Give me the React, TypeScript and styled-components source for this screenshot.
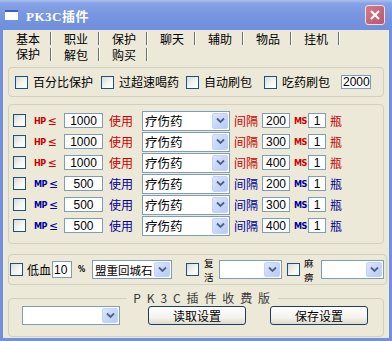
import styled, { createGlobalStyle } from "styled-components";

const GlobalStyle = createGlobalStyle`
  html, body { margin: 0; padding: 0; background: #ffffff; }
  body {
    font-family: "Noto Sans CJK SC", "DejaVu Sans", sans-serif;
    font-size: 12px;
    color: #000;
  }
  * { box-sizing: border-box; }
`;

const RED = "#cc0000";
const BLUE = "#000099";

const Window = styled.div`
  width: 392px;
  height: 341px;
  display: flex;
  flex-direction: column;
  background: #7390dc;
`;

const TitleBar = styled.div`
  height: 30px;
  display: flex;
  align-items: center;
  padding: 0 7px 0 5px;
  background: linear-gradient(#a9bff0 0%, #86a2e6 12%, #7896e0 50%, #6f8edc 100%);
`;

const TitleIcon = styled.div`
  width: 13px;
  height: 10px;
  background: #fff;
  border-top: 2px solid #3a5fc0;
  margin-right: 8px;
`;

const TitleText = styled.span`
  flex: 1;
  color: #fff;
  font-weight: bold;
  font-size: 13px;
  font-family: "Liberation Serif", "Noto Sans CJK SC", serif;
  letter-spacing: 0.5px;
`;

const CloseButton = styled.div`
  width: 20px;
  height: 20px;
  border: 1px solid #f2dde2;
  border-radius: 3px;
  background: linear-gradient(135deg, #d47c88, #b9566a);
  display: flex;
  align-items: center;
  justify-content: center;
`;

const Frame = styled.div`
  flex: 1;
  padding: 0 3px 3px 3px;
  display: flex;
`;

const Body = styled.div`
  flex: 1;
  background: #ece9d8;
  display: flex;
  flex-direction: column;
`;

const TabRow = styled.div`
  display: flex;
  height: 16px;
`;

const Tab = styled.div<{ $active?: boolean }>`
  width: 48px;
  height: 16px;
  position: relative;
  display: flex;
  align-items: center;
  justify-content: center;
  font-size: 12px;
  line-height: 12px;
  padding-top: ${(p) => (p.$active ? "0" : "1px")};
  padding-left: 2px;

  &::after {
    content: "";
    position: absolute;
    right: 0;
    top: 2px;
    bottom: 1px;
    width: 1px;
    background: #6f6f6f;
    box-shadow: 1px 0 0 #ffffff;
  }
`;

const Group = styled.div<{ $mt: number; $h: number; $mr?: number }>`
  margin: ${(p) => p.$mt}px ${(p) => p.$mr ?? 5}px 0 5px;
  height: ${(p) => p.$h}px;
  border: 1px solid #d0d0bf;
  border-radius: 4px;
`;

const OptionRow = styled.div`
  display: flex;
  align-items: center;
  height: 100%;
  padding-left: 6px;
`;

const CheckItem = styled.div<{ $w: number }>`
  width: ${(p) => p.$w}px;
  display: flex;
  align-items: center;
  gap: 5px;
`;

const Check = styled.div`
  width: 13px;
  height: 13px;
  flex: none;
  border: 1px solid #1c5180;
  background: linear-gradient(135deg, #dcdcd5 0%, #f6f6f3 60%, #ffffff 100%);
`;

const Label = styled.span<{ $color?: string }>`
  font-size: 12px;
  white-space: nowrap;
  color: ${(p) => p.$color ?? "#000"};
  line-height: 1;
`;

const TextBox = styled.div<{ $w: number; $h?: number; $center?: boolean }>`
  width: ${(p) => p.$w}px;
  height: ${(p) => p.$h ?? 15}px;
  border: 1px solid #7f9db9;
  background: #fff;
  display: flex;
  align-items: center;
  justify-content: ${(p) => (p.$center ? "center" : "flex-start")};
  padding: 0 1px;
  font-family: "Liberation Sans", "DejaVu Sans", sans-serif;
  font-size: 12px;
  line-height: 1;
`;

const RuleList = styled.div`
  padding: 5px 0 0 4px;
  display: flex;
  flex-direction: column;
`;

const RuleRow = styled.div`
  display: grid;
  grid-template-columns: 21px 30px 45px 33px 92px 28px 32px 14px 22px 20px;
  align-items: center;
  height: 21px;
`;

const StatTag = styled.span<{ $color: string }>`
  color: ${(p) => p.$color};
  font-family: "DejaVu Sans Condensed", "Liberation Sans", sans-serif;
  font-weight: bold;
  font-size: 9px;
  letter-spacing: -0.5px;
  display: flex;
  align-items: center;
  gap: 2px;

  b {
    font-size: 12px;
    font-weight: normal;
  }
`;

const SelectBox = styled.div<{ $w: number; $h?: number }>`
  width: ${(p) => p.$w}px;
  height: ${(p) => p.$h ?? 20}px;
  border: 1px solid #7f9db9;
  background: #fff;
  display: flex;
  align-items: stretch;
  padding: 1px;
`;

const SelectText = styled.span<{ $fs: number }>`
  flex: 1;
  min-width: 0;
  display: flex;
  align-items: center;
  padding-left: 1px;
  font-size: ${(p) => p.$fs}px;
  white-space: nowrap;
  overflow: hidden;
`;

const ArrowBtn = styled.span`
  width: 16px;
  flex: none;
  border-radius: 2px;
  background: linear-gradient(135deg, #dbe5fd, #b6cbf8);
  border: 1px solid #c3d3f7;
  display: flex;
  align-items: center;
  justify-content: center;
`;

const BottomRow = styled.div`
  display: grid;
  grid-template-columns: 17px 25px 25px 15px 94px 18px 15px 68px 17px 17px 63px;
  align-items: center;
  height: 100%;
  padding-left: 1px;
`;

const Stacked = styled.span`
  display: flex;
  flex-direction: column;
  font-size: 9.5px;
  line-height: 14px;

  span {
    display: block;
    height: 14px;
  }
`;

const Percent = styled.span`
  font-family: "DejaVu Sans Condensed", "Liberation Sans", sans-serif;
  font-weight: bold;
  font-size: 8px;
  padding-left: 1px;
`;

const Fieldset = styled.fieldset`
  margin: 7px 5px 0 5px;
  height: 45px;
  border: 1px solid #d0d0bf;
  border-radius: 4px;
  padding: 2px 0 0 13px;
  display: flex;
  align-items: center;
  min-width: 0;

  legend {
    margin: 0 auto;
    padding: 0 6px;
    font-size: 12px;
    line-height: 12px;
    letter-spacing: 1.6px;
    color: #3a3a3a;
  }
`;

const FooterRow = styled.div`
  display: flex;
  align-items: center;
  width: 100%;
`;

const XPButton = styled.div<{ $ml: number }>`
  margin-left: ${(p) => p.$ml}px;
  width: 98px;
  height: 19px;
  border: 1px solid #1f3c64;
  border-radius: 3px;
  background: linear-gradient(#ffffff 0%, #f4f3ee 60%, #dedbcf 100%);
  display: flex;
  align-items: center;
  justify-content: center;
  font-size: 12px;
`;

const Chevron = () => (
  <svg width="9" height="7" viewBox="0 0 9 7">
    <path d="M1 1.5 L4.5 5 L8 1.5" fill="none" stroke="#4d6185" strokeWidth="1.8" />
  </svg>
);

const Select = ({ w, h, text, fs = 12.5 }: { w: number; h?: number; text?: string; fs?: number }) => (
  <SelectBox $w={w} $h={h}>
    <SelectText $fs={fs}>{text}</SelectText>
    <ArrowBtn>
      <Chevron />
    </ArrowBtn>
  </SelectBox>
);

type Rule = { kind: "HP" | "MP"; value: number; gap: number };

const rules: Rule[] = [
  { kind: "HP", value: 1000, gap: 200 },
  { kind: "HP", value: 1000, gap: 300 },
  { kind: "HP", value: 1000, gap: 400 },
  { kind: "MP", value: 500, gap: 200 },
  { kind: "MP", value: 500, gap: 300 },
  { kind: "MP", value: 500, gap: 400 },
];

const topTabs = ["基本", "职业", "保护", "聊天", "辅助", "物品", "挂机"];
const subTabs = ["保护", "解包", "购买"];

export default function App() {
  return (
    <>
      <GlobalStyle />
      <Window>
        <TitleBar>
          <TitleIcon />
          <TitleText>PK3C插件</TitleText>
          <CloseButton>
            <svg width="12" height="12" viewBox="0 0 12 12">
              <path d="M2 2 L10 10 M10 2 L2 10" stroke="#fff" strokeWidth="2.2" />
            </svg>
          </CloseButton>
        </TitleBar>
        <Frame>
          <Body>
            <TabRow>
              {topTabs.map((t) => (
                <Tab key={t}>{t}</Tab>
              ))}
            </TabRow>
            <TabRow>
              {subTabs.map((t, i) => (
                <Tab key={t} $active={i === 0}>
                  {t}
                </Tab>
              ))}
            </TabRow>

            <Group $mt={5} $h={30}>
              <OptionRow>
                <CheckItem $w={86}>
                  <Check />
                  <Label>百分比保护</Label>
                </CheckItem>
                <CheckItem $w={85}>
                  <Check />
                  <Label>过超速喝药</Label>
                </CheckItem>
                <CheckItem $w={78}>
                  <Check />
                  <Label>自动刷包</Label>
                </CheckItem>
                <CheckItem $w={77}>
                  <Check />
                  <Label>吃药刷包</Label>
                </CheckItem>
                <TextBox $w={30} $h={14}>
                  2000
                </TextBox>
              </OptionRow>
            </Group>

            <Group $mt={7} $h={140}>
              <RuleList>
                {rules.map((r, i) => {
                  const c = r.kind === "HP" ? RED : BLUE;
                  return (
                    <RuleRow key={i}>
                      <Check />
                      <StatTag $color={c}>
                        {r.kind}
                        <b>≤</b>
                      </StatTag>
                      <TextBox $w={39} $center>
                        {r.value}
                      </TextBox>
                      <Label $color={c}>使用</Label>
                      <Select w={88} text="疗伤药" />
                      <Label $color={c}>间隔</Label>
                      <TextBox $w={28} $center>
                        {r.gap}
                      </TextBox>
                      <StatTag $color={c}>MS</StatTag>
                      <TextBox $w={18} $center>
                        1
                      </TextBox>
                      <Label $color={c}>瓶</Label>
                    </RuleRow>
                  );
                })}
              </RuleList>
            </Group>

            <Group $mt={10} $h={31} $mr={2}>
              <BottomRow>
                <Check />
                <Label>低血</Label>
                <TextBox $w={20} $h={17}>
                  10
                </TextBox>
                <Percent>%</Percent>
                <Select w={80} h={19} fs={11.5} text="盟重回城石" />
                <Check />
                <Stacked>
                  <span>复</span>
                  <span>活</span>
                </Stacked>
                <Select w={63} h={19} />
                <Check />
                <Stacked>
                  <span>麻</span>
                  <span>痹</span>
                </Stacked>
                <Select w={63} h={19} />
              </BottomRow>
            </Group>

            <Fieldset>
              <legend>P K 3 C 插 件 收 费 版</legend>
              <FooterRow>
                <Select w={98} h={19} />
                <XPButton $ml={28}>读取设置</XPButton>
                <XPButton $ml={24}>保存设置</XPButton>
              </FooterRow>
            </Fieldset>
          </Body>
        </Frame>
      </Window>
    </>
  );
}
